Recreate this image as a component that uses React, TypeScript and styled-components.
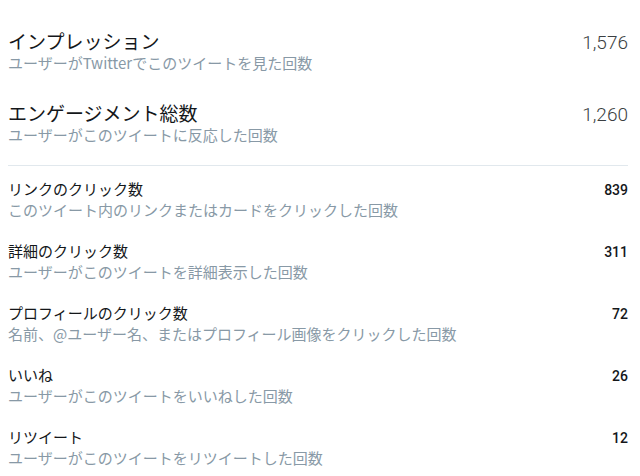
import styled, { createGlobalStyle } from "styled-components";

const GlobalStyle = createGlobalStyle`
  html, body {
    margin: 0;
    padding: 0;
    background: #ffffff;
  }
  body {
    font-family: "Noto Sans CJK JP", "Liberation Sans", sans-serif;
    -webkit-font-smoothing: antialiased;
  }
`;

const Panel = styled.div`
  width: 640px;
  box-sizing: border-box;
  padding: 29px 12px 0 8px;
`;

const Section = styled.div<{ $gap: number }>`
  display: flex;
  flex-direction: column;
  gap: ${(p) => p.$gap}px;
`;

const Divider = styled.hr`
  border: none;
  border-top: 1px solid #e1e8ed;
  margin: 20px 0 12px;
`;

const Row = styled.div`
  display: flex;
  justify-content: space-between;
  align-items: flex-start;
`;

const Texts = styled.div`
  display: flex;
  flex-direction: column;
`;

const Title = styled.div<{ $big?: boolean }>`
  color: #14171a;
  font-size: ${(p) => (p.$big ? "19px" : "15px")};
  line-height: ${(p) => (p.$big ? "24px" : "22px")};
`;

const Desc = styled.div`
  color: #8899a6;
  font-size: 15px;
  line-height: 20px;
`;

const Value = styled.div<{ $big?: boolean }>`
  color: ${(p) => (p.$big ? "#3b3f42" : "#14171a")};
  font-family: "Roboto", "Liberation Sans", sans-serif;
  font-size: ${(p) => (p.$big ? "19px" : "14px")};
  font-weight: ${(p) => (p.$big ? 300 : 500)};
  line-height: ${(p) => (p.$big ? "28px" : "24px")};
`;

type Metric = { title: string; desc: string; value: string };

const main: Metric[] = [
  {
    title: "インプレッション",
    desc: "ユーザーがTwitterでこのツイートを見た回数",
    value: "1,576",
  },
  {
    title: "エンゲージメント総数",
    desc: "ユーザーがこのツイートに反応した回数",
    value: "1,260",
  },
];

const details: Metric[] = [
  {
    title: "リンクのクリック数",
    desc: "このツイート内のリンクまたはカードをクリックした回数",
    value: "839",
  },
  {
    title: "詳細のクリック数",
    desc: "ユーザーがこのツイートを詳細表示した回数",
    value: "311",
  },
  {
    title: "プロフィールのクリック数",
    desc: "名前、@ユーザー名、またはプロフィール画像をクリックした回数",
    value: "72",
  },
  {
    title: "いいね",
    desc: "ユーザーがこのツイートをいいねした回数",
    value: "26",
  },
  {
    title: "リツイート",
    desc: "ユーザーがこのツイートをリツイートした回数",
    value: "12",
  },
];

const App = () => {
  return (
    <>
      <GlobalStyle />
      <Panel>
        {/* 主要な指標 */}
        <Section $gap={28}>
          {main.map((m) => (
            <Row key={m.title}>
              <Texts>
                <Title $big>{m.title}</Title>
                <Desc>{m.desc}</Desc>
              </Texts>
              <Value $big>{m.value}</Value>
            </Row>
          ))}
        </Section>

        <Divider />

        {/* 詳細 */}
        <Section $gap={20}>
          {details.map((m) => (
            <Row key={m.title}>
              <Texts>
                <Title>{m.title}</Title>
                <Desc>{m.desc}</Desc>
              </Texts>
              <Value>{m.value}</Value>
            </Row>
          ))}
        </Section>
      </Panel>
    </>
  );
};

export default App;
